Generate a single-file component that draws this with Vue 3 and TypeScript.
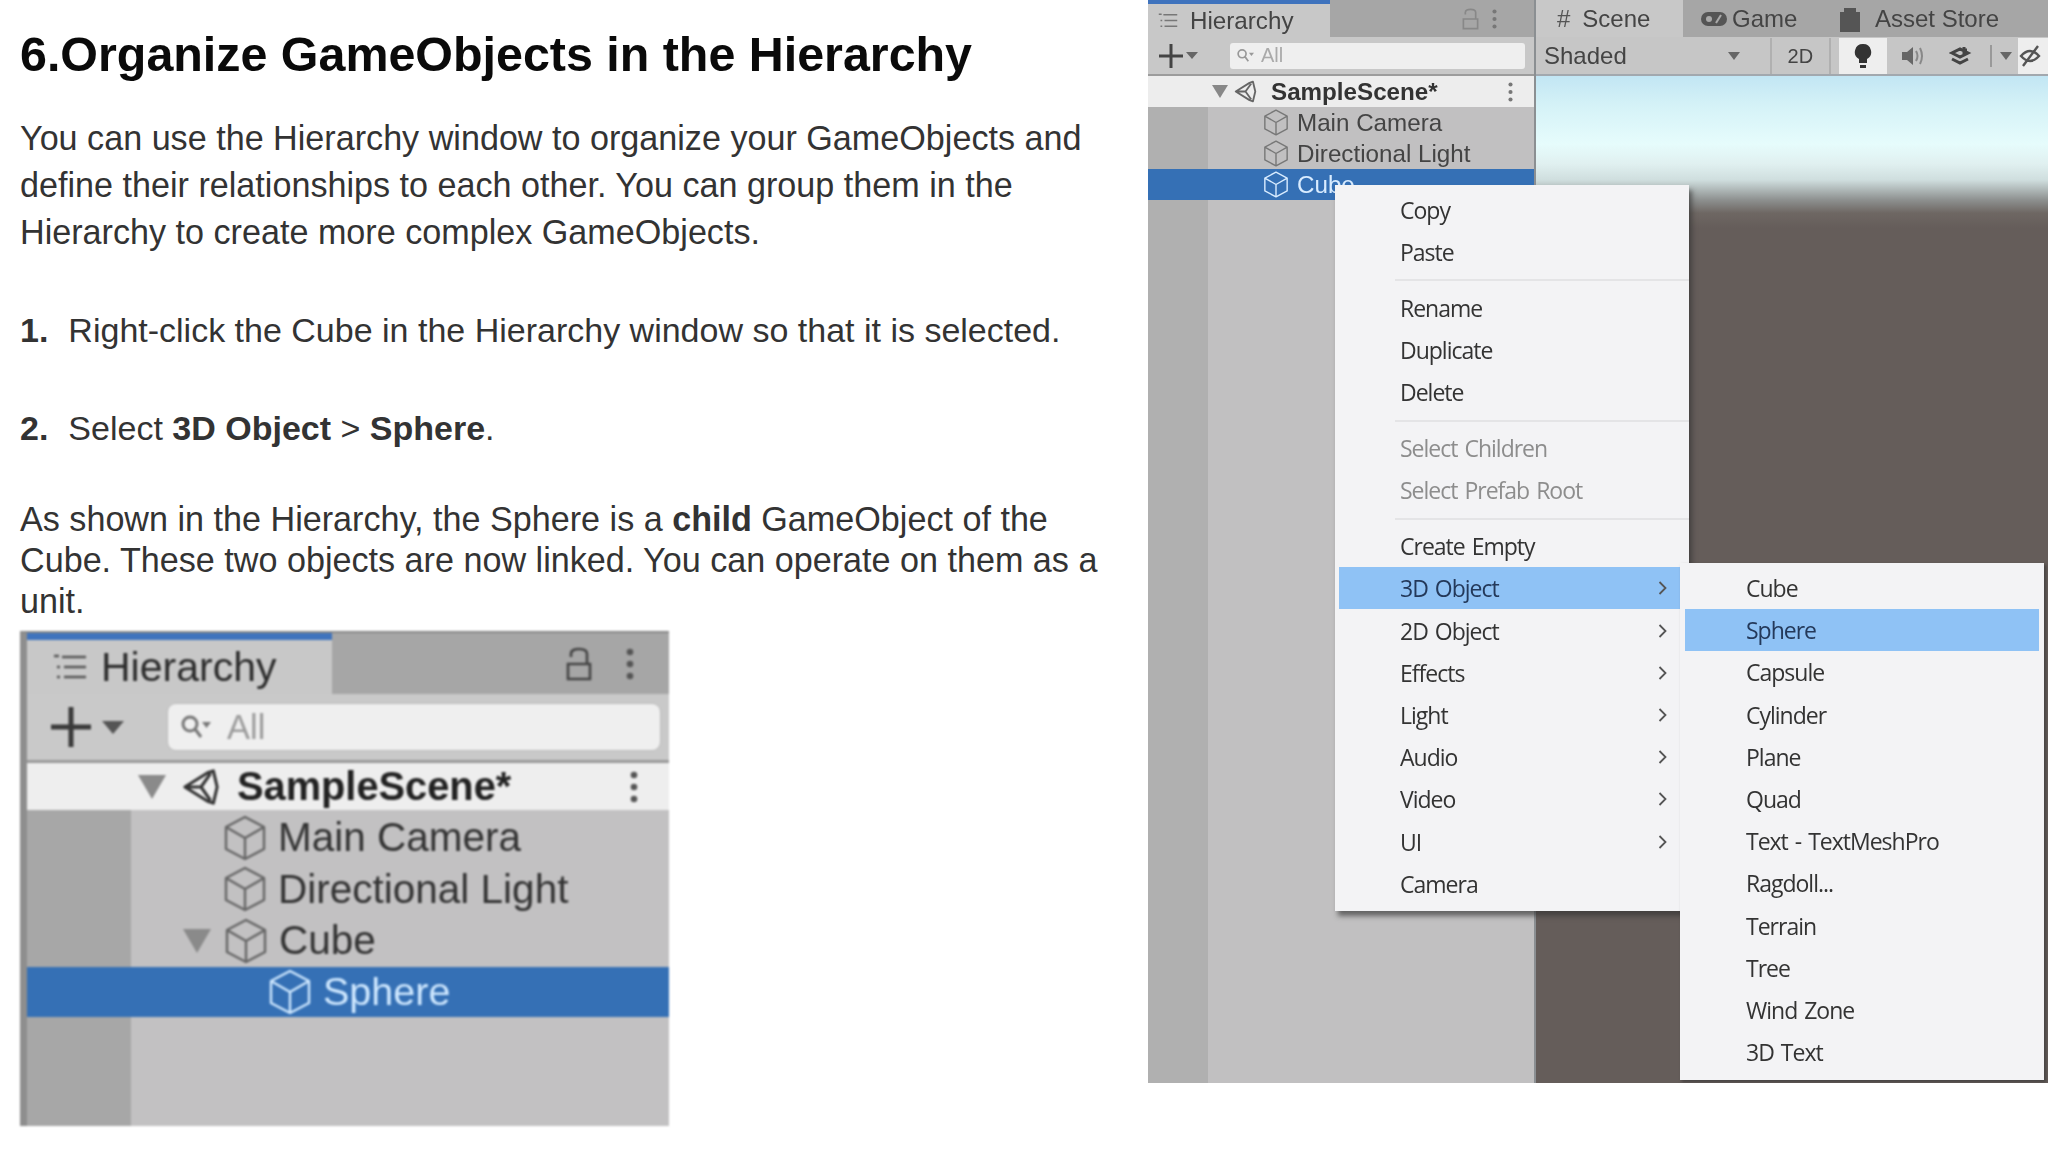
<script setup lang="ts">
interface Item { label: string; muted?: boolean; arrow?: boolean; active?: boolean; sep?: boolean }
const menu: Item[] = [
  { label: 'Copy' }, { label: 'Paste' }, { label: '', sep: true },
  { label: 'Rename' }, { label: 'Duplicate' }, { label: 'Delete' }, { label: '', sep: true },
  { label: 'Select Children', muted: true }, { label: 'Select Prefab Root', muted: true }, { label: '', sep: true },
  { label: 'Create Empty' }, { label: '3D Object', arrow: true, active: true }, { label: '2D Object', arrow: true },
  { label: 'Effects', arrow: true }, { label: 'Light', arrow: true }, { label: 'Audio', arrow: true },
  { label: 'Video', arrow: true }, { label: 'UI', arrow: true }, { label: 'Camera' }
]
const sub: Item[] = ['Cube', 'Sphere', 'Capsule', 'Cylinder', 'Plane', 'Quad', 'Text - TextMeshPro', 'Ragdoll...', 'Terrain', 'Tree', 'Wind Zone', '3D Text']
  .map((label) => ({ label, active: label === 'Sphere' }))
</script>

<template>
  <svg class="defs" width="0" height="0" aria-hidden="true">
    <symbol id="cube" viewBox="0 0 44 46">
      <path d="M22 2 41 12V34L22 44 3 34V12ZM3 12 22 23 41 12M22 23V44" fill="none" stroke="currentColor" stroke-width="2.400" stroke-linejoin="round" />
    </symbol>
    <symbol id="unity" viewBox="0 0 40 40">
      <path d="M3 20 27 5 33 3 37 20 33 37 27 35ZM3 20H20L30 6M20 20 30 34" fill="none" stroke="currentColor" stroke-width="3.200" stroke-linejoin="round" />
    </symbol>
    <symbol id="list" viewBox="0 0 34 26">
      <path d="M9 3H33M11 13H33M11 23H33M1 2H6M4 13H7M4 23H7" fill="none" stroke="currentColor" stroke-width="2.600" />
    </symbol>
    <symbol id="lock" viewBox="0 0 26 34">
      <path d="M5 10V7C5 3 9 2 13 2S21 3 21 7V17M2 17H24V32H2Z" fill="none" stroke="currentColor" stroke-width="2.600" />
    </symbol>
    <symbol id="dots" viewBox="0 0 8 32">
      <circle cx="4" cy="4" r="3.300" fill="currentColor" /><circle cx="4" cy="16" r="3.300" fill="currentColor" /><circle cx="4" cy="28" r="3.300" fill="currentColor" />
    </symbol>
    <symbol id="search" viewBox="0 0 30 30">
      <path d="M16 12A7 7 0 1 1 2 12 7 7 0 0 1 16 12ZM14 17 20 25" fill="none" stroke="currentColor" stroke-width="3" /><path d="M21 10H30L25.500 16Z" fill="currentColor" />
    </symbol>
    <symbol id="plus" viewBox="0 0 40 40">
      <path d="M0 20H40M20 0V40" fill="none" stroke="currentColor" stroke-width="5" />
    </symbol>
  </svg>

  <div class="page">
    <main class="left">
      <h1>6.Organize GameObjects in the Hierarchy</h1>
      <p class="intro">You can use the Hierarchy window to organize your GameObjects and define their relationships to each other. You can group them in the Hierarchy to create more complex GameObjects.</p>
      <ol class="steps">
        <li><b>1.</b><span>Right-click the Cube in the Hierarchy window so that it is selected.</span></li>
        <li><b>2.</b><span>Select <b>3D Object</b> &gt; <b>Sphere</b>.</span></li>
      </ol>
      <p class="note">As shown in the Hierarchy, the Sphere is a <b>child</b> GameObject of the Cube. These two objects are now linked. You can operate on them as a unit.</p>

      <section class="big">
        <div class="big-tabs">
          <div class="big-tab"><svg class="b-list"><use href="#list" /></svg>Hierarchy</div>
          <svg class="b-lock"><use href="#lock" /></svg>
          <svg class="b-dots"><use href="#dots" /></svg>
        </div>
        <div class="big-tools">
          <svg class="b-plus"><use href="#plus" /></svg><i class="b-drop"></i>
          <div class="b-search"><svg class="b-mag"><use href="#search" /></svg>All</div>
        </div>
        <div class="big-scene">
          <i class="b-tri"></i><svg class="b-unity"><use href="#unity" /></svg><b>SampleScene*</b>
          <svg class="b-dots b-dots2"><use href="#dots" /></svg>
        </div>
        <div class="big-tree">
          <div class="big-row b1"><svg class="b-cube"><use href="#cube" /></svg>Main Camera</div>
          <div class="big-row b1"><svg class="b-cube"><use href="#cube" /></svg>Directional Light</div>
          <div class="big-row b2"><i class="b-tri small"></i><svg class="b-cube"><use href="#cube" /></svg>Cube</div>
          <div class="big-row sel"><svg class="b-cube"><use href="#cube" /></svg>Sphere</div>
        </div>
      </section>
    </main>

    <aside class="shot">
      <div class="hier">
        <div class="s-tabs">
          <div class="s-tab"><svg class="s-list"><use href="#list" /></svg>Hierarchy</div>
          <svg class="s-lock"><use href="#lock" /></svg>
          <svg class="s-dots"><use href="#dots" /></svg>
        </div>
        <div class="s-tools">
          <svg class="s-plus"><use href="#plus" /></svg><i class="s-drop"></i>
          <div class="s-search"><svg class="s-mag"><use href="#search" /></svg>All</div>
        </div>
        <div class="s-scene"><i class="s-tri"></i><svg class="s-unity"><use href="#unity" /></svg><b>SampleScene*</b><svg class="s-dots s-dots2"><use href="#dots" /></svg></div>
        <div class="s-tree">
          <div class="s-row"><svg class="s-cube"><use href="#cube" /></svg>Main Camera</div>
          <div class="s-row"><svg class="s-cube"><use href="#cube" /></svg>Directional Light</div>
          <div class="s-row s-sel"><svg class="s-cube"><use href="#cube" /></svg>Cube</div>
        </div>
      </div>

      <div class="scene">
        <div class="v-tabs">
          <div class="v-tab on"><span class="hash">#</span>Scene</div>
          <div class="v-tab game"><svg width="26" height="14" viewBox="0 0 26 14"><path d="M7 0H19A7 7 0 0 1 19 14H7A7 7 0 0 1 7 0Z" fill="#555" /><circle cx="8" cy="7" r="3" fill="#aaa" /><path d="M15 11 20 3" stroke="#aaa" stroke-width="2" /></svg>Game</div>
          <div class="v-tab store"><svg width="20" height="26" viewBox="0 0 20 26"><path d="M5 7V3H15V7M1 7H19V25H1Z" fill="#555" stroke="#555" stroke-width="2" /></svg>Asset Store</div>
        </div>
        <div class="v-tools">
          <span class="shaded">Shaded</span><i class="v-drop"></i>
          <span class="two">2D</span>
          <span class="btn white"><svg width="18" height="26" viewBox="0 0 18 26"><path d="M9 1A8 8 0 0 1 13 16V20H5V16A8 8 0 0 1 9 1ZM6 22H12V25H6Z" fill="#333" /></svg></span>
          <span class="btn"><svg width="24" height="20" viewBox="0 0 24 20"><path d="M1 6H6L12 1V19L6 14H1Z" fill="#666" /><path d="M15 5Q18 10 15 15M19 2Q23 10 19 18" fill="none" stroke="#888" stroke-width="2" /></svg></span>
          <span class="btn"><svg width="24" height="24" viewBox="0 0 24 24"><path d="M3 9 11 13 19 9 11 5ZM3 15 11 19 19 15M15 3V10M12 6H18" fill="none" stroke="#444" stroke-width="3" /></svg></span>
          <i class="v-bar"></i><i class="v-drop v-drop2"></i>
          <span class="btn white end"><svg width="24" height="24" viewBox="0 0 24 24"><path d="M3 12Q12 2 21 12Q12 22 3 12ZM5 22 20 2" fill="none" stroke="#555" stroke-width="2.400" /></svg></span>
        </div>
        <div class="view"></div>
      </div>

      <ul class="menu main-menu">
        <template v-for="(m, i) in menu" :key="i">
          <li v-if="m.sep" class="sep"></li>
          <li v-else class="item" :class="{ muted: m.muted, active: m.active }">
            {{ m.label }}
            <svg v-if="m.arrow" class="chev" width="9" height="16" viewBox="0 0 9 16"><path d="M1.500 2 7.500 8 1.500 14" fill="none" stroke="#555" stroke-width="1.800" /></svg>
          </li>
        </template>
      </ul>
      <ul class="menu sub-menu">
        <li v-for="s in sub" :key="s.label" class="item" :class="{ active: s.active }">{{ s.label }}</li>
      </ul>
    </aside>
  </div>
</template>

<style>
html, body { margin: 0; background: #fff; }
</style>

<style scoped>
.defs { position: absolute; }
.page {
  width: 2048px; height: 1152px; display: grid; grid-template-columns: 1148px 900px;
  align-items: start; overflow: hidden; background: #fff;
  font-family: "Liberation Sans", Arial, sans-serif; color: #333;
}
.left { padding-left: 20px; width: 1100px; }
h1 { margin: 24px 0 0; font-size: 48.400px; line-height: 60px; font-weight: 700; color: #0a0a0a; }
.intro { margin: 31px 0 0; font-size: 34.150px; line-height: 47px; }
.steps { list-style: none; margin: 0; padding: 0; font-size: 34px; line-height: 47px; }
.steps li { display: flex; gap: 20px; }
.steps li:first-child { margin-top: 51px; }
.steps li + li { margin-top: 51px; }
.note { margin: 47px 0 0; font-size: 34.150px; line-height: 41px; }

.big {
  margin-top: 9px; width: 649px; height: 495px; background: #c3c2c3; overflow: hidden;
  border-left: 7px solid #8e8e8e; box-sizing: border-box; filter: blur(.8px); position: relative;
  border-top: 2px solid #888;
}
.big-tabs { height: 61px; background: #a6a6a6; display: flex; align-items: center; }
.big-tab {
  width: 305px; height: 100%; box-sizing: border-box; background: #c8c8c8; border-top: 7px solid #3f73bd;
  display: flex; align-items: center; font-size: 41px; color: #2c2c2c; margin-right: 234px;
}
.b-list { width: 34px; height: 26px; margin: 0 14px 0 26px; color: #555; }
.b-lock { width: 26px; height: 34px; color: #444; }
.b-dots { width: 8px; height: 32px; color: #555; margin-left: 34px; }
.big-tools { height: 66px; background: #c9c9c9; border-bottom: 3px solid #9a9a9a; display: flex; align-items: center; position: relative; }
.b-plus { width: 40px; height: 40px; margin-left: 24px; color: #3a3a3a; flex: none; }
.b-drop { border: 11px solid transparent; border-top: 13px solid #555; border-bottom: 0; margin-left: 11px; }
.b-search {
  margin-left: 44px; width: 492px; height: 46px; background: #efefef; border-radius: 8px; display: flex; align-items: center;
  color: #9b9b9b; font-size: 34.500px; box-shadow: 0 0 0 1px #bdbdbd;
}
.b-mag { width: 30px; height: 30px; margin: 0 16px 0 13px; color: #777; }
.big-scene { height: 47px; background: #eeeeee; display: flex; align-items: center; color: #222; font-size: 39.800px; position: relative; margin-top: 0; }
.b-tri { border: 14px solid transparent; border-top: 24px solid #8a8a8a; border-bottom: 0; margin-left: 111px; }
.b-tri.small { margin: 0 13px 0 0; }
.b-unity { width: 38px; height: 38px; margin: 0 17px 0 16px; color: #333; }
.b-dots2 { position: absolute; right: 31px; margin: 0; }
.big-tree { height: 316px; background: linear-gradient(to right, #a7a7a7 104px, #c2c1c2 104px); padding-top: 2px; box-sizing: border-box; }
.big-row { height: 51.500px; display: flex; align-items: center; font-size: 40.500px; color: #333; }
.b-cube { width: 44px; height: 46px; margin-right: 11px; color: #666; }
.b1 { padding-left: 196px; }
.b2 { padding-left: 156px; }
.sel { padding-left: 241px; height: 50px; background: #3570b5; color: #cfe8ff; font-size: 39.500px; }
.sel .b-cube { color: #cfe8ff; }

.shot { width: 900px; height: 1083px; position: relative; overflow: hidden; display: flex; filter: blur(.7px); background: #c0c0c0; }
.hier { width: 388px; flex: none; border-right: 2px solid #8b8f92; box-sizing: border-box; background: linear-gradient(to right, #b0b0b0 60px, #c1c0c1 60px); font-size: 24.200px; color: #333; }
.s-tabs { height: 37px; background: #a6a6a6; display: flex; align-items: center; }
.s-tab { width: 182px; height: 100%; box-sizing: border-box; background: #c8c8c8; border-top: 4px solid #3f73bd; display: flex; align-items: center; color: #444; margin-right: 132px; }
.s-list { width: 20px; height: 15px; margin: 0 12px 0 10px; color: #777; }
.s-lock { width: 17px; height: 22px; color: #888; }
.s-dots { width: 5px; height: 20px; color: #777; margin-left: 13px; }
.s-tools { height: 39px; background: #c8c8c8; border-bottom: 2px solid #9c9c9c; box-sizing: border-box; display: flex; align-items: center; }
.s-plus { width: 24px; height: 24px; margin-left: 11px; color: #444; flex: none; }
.s-drop { border: 6px solid transparent; border-top: 7px solid #666; border-bottom: 0; margin-left: 3px; }
.s-search { margin-left: 32px; width: 295px; height: 26px; background: #efefef; border-radius: 3px; color: #aaa; font-size: 20px; display: flex; align-items: center; }
.s-mag { width: 17px; height: 17px; margin: 0 7px 0 7px; color: #999; }
.s-scene { height: 31px; background: #ededed; display: flex; align-items: center; position: relative; color: #333; }
.s-tri { border: 8px solid transparent; border-top: 13px solid #888; border-bottom: 0; margin-left: 64px; }
.s-unity { width: 23px; height: 23px; margin: 0 14px 0 6px; color: #666; }
.s-dots2 { position: absolute; right: 21px; margin: 0; }
.s-row { height: 31px; display: flex; align-items: center; padding-left: 115px; color: #444; }
.s-cube { width: 26px; height: 27px; margin-right: 8px; color: #777; }
.s-sel { background: #3570b5; color: #d9ecff; }
.s-sel .s-cube { color: #d9ecff; }

.scene { flex: 1; display: flex; flex-direction: column; min-width: 0; height: 100%; }
.v-tabs { height: 37px; background: #a6a6a6; display: flex; align-items: center; font-size: 24px; color: #444; flex: none; }
.v-tab { height: 100%; display: flex; align-items: center; box-sizing: border-box; }
.v-tab.on { width: 147px; background: #c8c8c8; padding-left: 21px; }
.hash { margin-right: 12px; color: #555; }
.game { margin-left: 18px; gap: 5px; width: 122px; }
.store { gap: 15px; margin-left: 17px; }
.v-tools { height: 39px; background: #c6c6c6; border-bottom: 2px solid #a2a8ae; box-sizing: border-box; display: flex; align-items: center; font-size: 24px; color: #444; flex: none; padding-top: 1px; }
.shaded { margin-left: 8px; width: 198px; }
.v-drop { border: 6px solid transparent; border-top: 8px solid #666; border-bottom: 0; }
.two { margin-left: 30px; font-size: 20px; width: 62px; height: 100%; display: flex; align-items: center; justify-content: center; border-left: 2px solid #b0b0b0; border-right: 2px solid #b0b0b0; }
.btn { width: 48px; height: 100%; display: flex; align-items: center; justify-content: center; flex: none; }
.btn.white { background: #eeeeee; margin-left: 8px; }
.btn.white + .btn { margin-left: 2px; }
.v-bar { width: 2px; height: 22px; background: #999; margin: 0 8px 0 5px; }
.v-drop2 { margin-right: 6px; }
.btn.end { margin-left: 0; width: 30px; justify-content: flex-start; }
.view { flex: 1; background: linear-gradient(to bottom, #c2e6f4 0, #d5f2f7 30px, #e6fcfc 68px, #e0f0f0 88px, #cfdede 104px, #8d908f 124px, #6e6763 137px, #655d5a 152px, #655d5a 100%); }

.menu { position: absolute; margin: 0; padding: 4px 0 0; list-style: none; background: #f3f3f5; box-sizing: border-box; font-family: "Open Sans", sans-serif; font-size: 23px; letter-spacing: -1px; word-spacing: 2px; color: #333; }
.main-menu { left: 187px; top: 185px; width: 354px; height: 726px; box-shadow: 3px 5px 5px rgba(50,50,50,.65); }
.sub-menu { left: 532px; top: 563px; width: 364px; height: 517px; box-shadow: 2px 2px 3px rgba(50,50,50,.6); }
.item { height: 42.200px; display: flex; align-items: center; padding-left: 65px; position: relative; }
.sep { height: 13.600px; position: relative; }
.sep::after { content: ""; position: absolute; left: 60px; right: 0; top: 6px; height: 2px; background: #e4e4e6; }
.muted { color: #8d8d8d; }
.active { background: #8fc2f5; color: #24395a; }
.main-menu .active { margin-left: 4px; padding-left: 61px; margin-right: 9px; }
.sub-menu .item { padding-left: 66px; }
.sub-menu .active { margin: 0 5px; padding-left: 61px; }
.chev { position: absolute; }
.main-menu .item .chev { right: 22px; }
.main-menu .active .chev { right: 13px; }
</style>
